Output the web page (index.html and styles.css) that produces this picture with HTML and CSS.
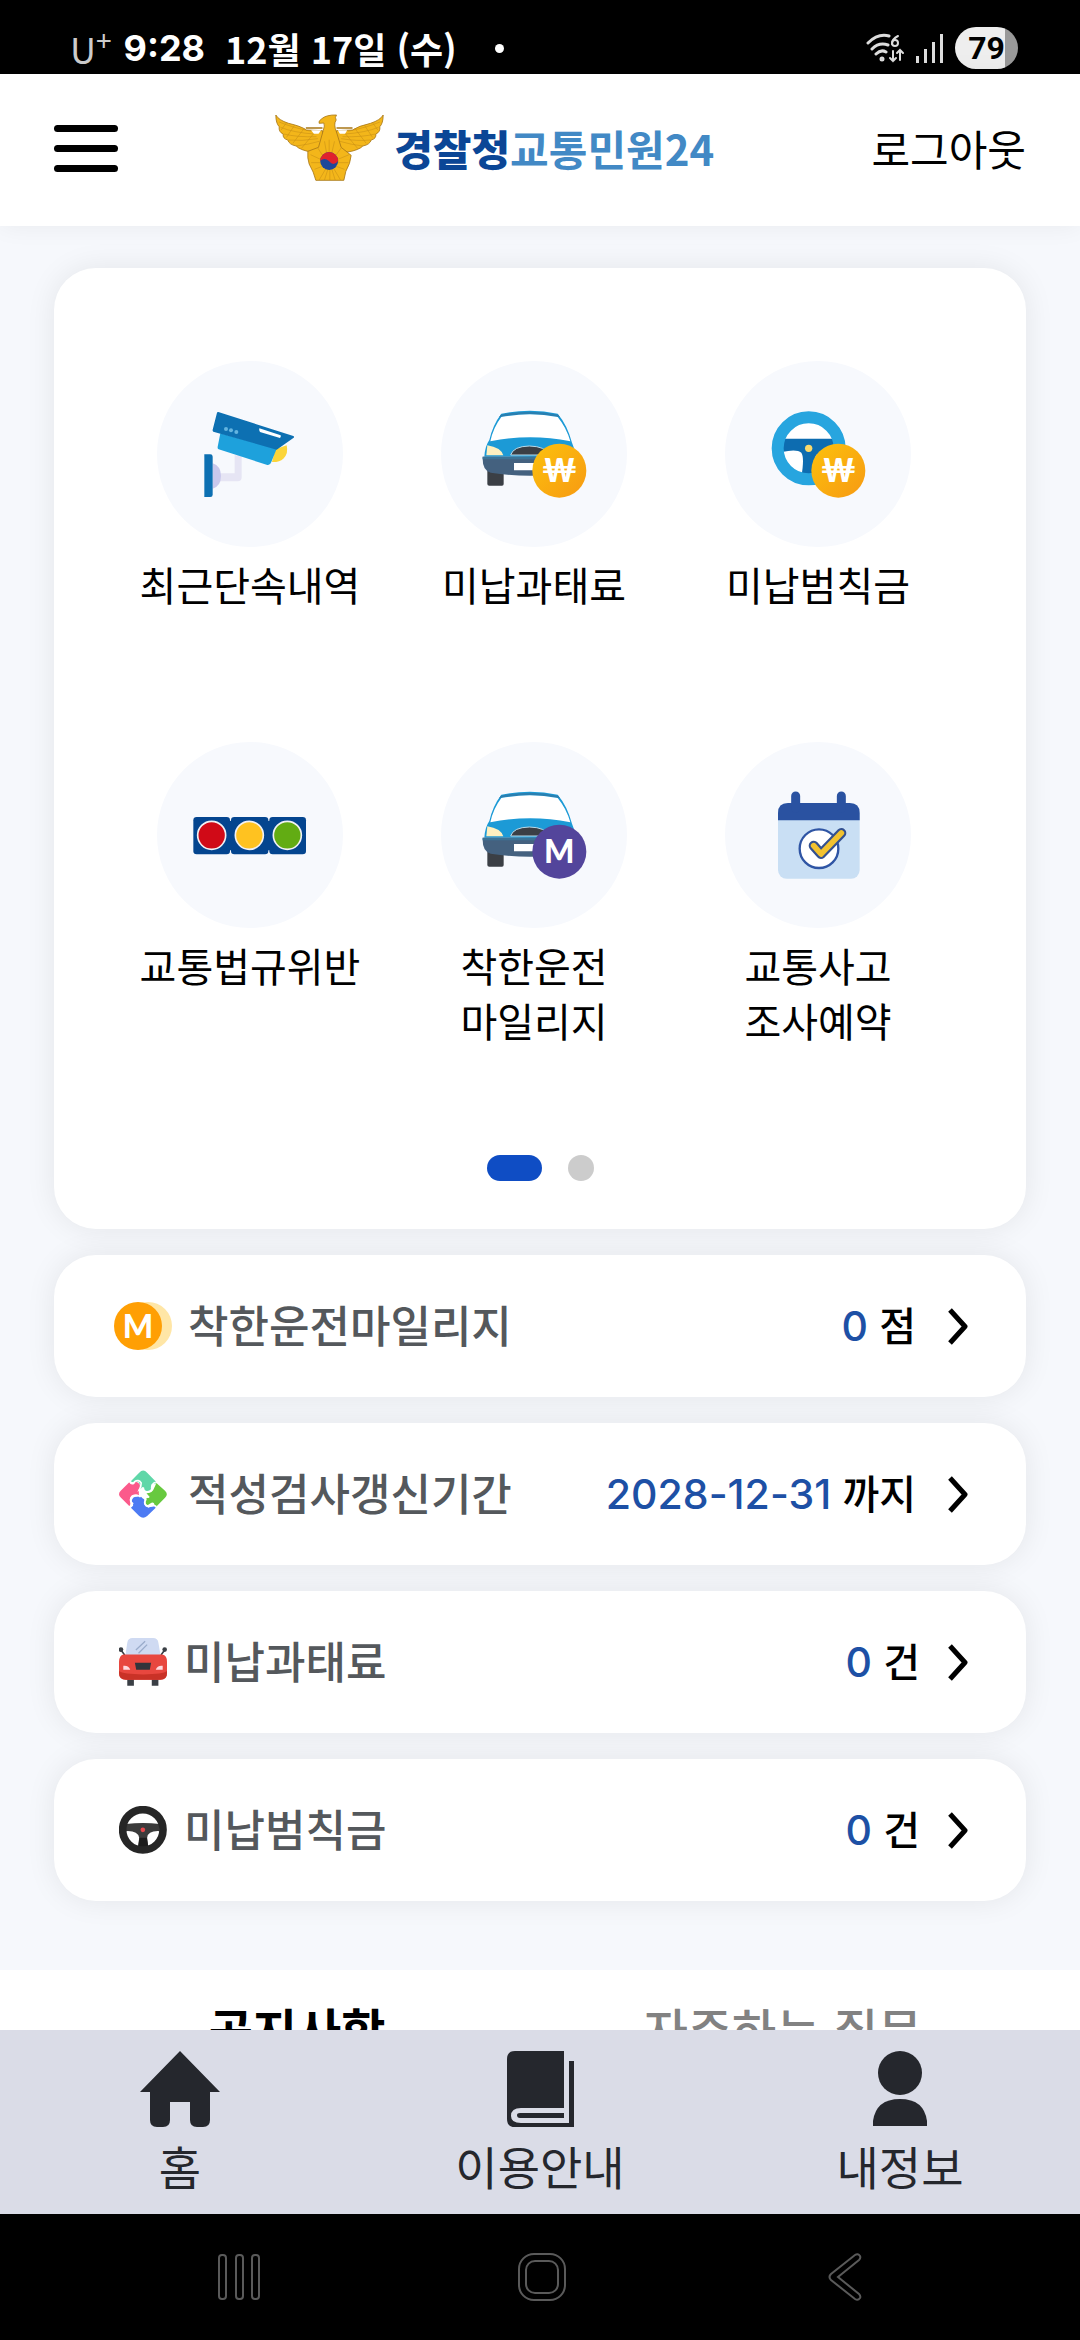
FILE: index.html
```html
<!DOCTYPE html>
<html lang="ko">
<head>
    <meta charset="UTF-8">
    <meta name="viewport" content="width=device-width, initial-scale=1.0">
    <title>경찰청교통민원24</title>
    <link rel="stylesheet" href="styles.css">
</head>
<body>
    <!-- 공용 아이콘 -->
    <svg class="sprite" aria-hidden="true">
        <defs>
            <linearGradient id="coin-fill" x1="0" y1="0" x2="1" y2="1">
                <stop offset="0" stop-color="#fcc10d"/>
                <stop offset="1" stop-color="#f79a12"/>
            </linearGradient>
            <symbol id="car" viewBox="57 63 558 558">
                <path d="M196 392h49v40q0 5-5 5h-38q-6 0-6-5z" fill="#3b3f45"/>
                <path d="M187 350Q189 318 202 300Q212 255 238 221Q325 204 407 221Q436 255 450 308L466 352z" fill="#1c9ad6"/>
                <path d="M236 224Q325 206 409 224L414 232Q325 214 231 232z" fill="#2a7fb0"/>
                <path d="M238 231Q325 215 407 231Q433 262 445 304Q325 280 205 304Q214 262 238 231z" fill="#fff"/>
                <path d="M196 316Q236 322 244 346H193z" fill="#fdf0c0"/>
                <path d="M266 345Q274 319 322 318Q372 319 380 345z" fill="#3b3f45" stroke="#b9d9e8" stroke-width="3"/>
                <path d="M182 350H466V395Q330 418 206 398Q180 392 182 350z" fill="#44617f"/>
                <path d="M182 350H466V358H182z" fill="#3b7396"/>
                <path d="M276 369h100v22H276z" fill="#fff"/>
            </symbol>
            <symbol id="chevron" viewBox="0 0 20 37">
                <path d="M2 2L17 18.500L2 35" fill="none" stroke="#000" stroke-width="5" stroke-linejoin="round"/>
            </symbol>
        </defs>
    </svg>

    <!-- 상태 표시줄 -->
    <div class="status-bar">
        <div class="status-left">
            <span class="carrier">U<sup>+</sup></span>
            <span class="clock">9:28</span>
            <span class="date">12월 17일 (수)</span>
            <span class="notice-dot"></span>
        </div>
        <div class="status-right">
            <svg class="wifi" viewBox="0 0 40 30" fill="none" stroke="#ddd" stroke-width="3" stroke-linecap="round">
                <path d="M2 10Q12 0 23 3M6 16Q13 9 22 12M10 21Q15 16 20 19"/>
                <path d="M32 3Q26 6 26 11M34 17V27M27 18V28M24 25L27 28L30 25M31 20L34 17L37 20" stroke-width="2"/>
                <circle cx="29" cy="10" r="3" stroke-width="2"/>
                <circle cx="16" cy="26" r="1" fill="#ddd"/>
            </svg>
            <svg class="signal" viewBox="0 0 28 30" fill="#ddd">
                <path d="M0 23h3v7H0zM8 16h3v14H8zM16 9h3v21h-3zM24 1h3v29h-3z"/>
            </svg>
            <span class="battery">79</span>
        </div>
    </div>

    <!-- 상단 헤더 -->
    <header class="header">
        <button class="menu-button" aria-label="메뉴">
            <span></span><span></span><span></span>
        </button>
        <a class="logo" href="#">
            <svg class="eagle" viewBox="42 48 326 204">
                <g fill="#f3b61a" stroke="#a87717" stroke-width="2.500" stroke-linejoin="round">
                    <path d="M44 51Q52 66 82 76Q118 84 136 96L184 98V152L150 162Q116 156 105 144Q84 140 80 126Q64 122 66 108Q52 102 54 86Q44 76 44 51z"/>
                    <path d="M366 51Q358 66 328 76Q292 84 274 96L226 98V152L260 162Q294 156 305 144Q326 140 330 126Q346 122 344 108Q358 102 356 86Q366 76 366 51z"/>
                    <path d="M186 98Q192 82 188 75L174 76Q170 70 182 62Q196 50 226 51Q220 58 225 66Q216 78 226 102L240 148L270 172Q268 196 254 220L248 247H164Q158 222 144 198Q138 180 140 160L172 148z"/>
                </g>
                <g fill="none" stroke="#c28a15" stroke-width="1.500">
                    <path d="M54 72Q92 88 150 100M58 88Q98 104 160 108M68 108Q108 118 166 116M82 126Q120 130 170 122M105 144Q140 140 174 130M120 152L160 104M95 136L130 90M76 118L100 82M60 96L76 74"/>
                    <path d="M356 72Q318 88 260 100M352 88Q312 104 250 108M342 108Q302 118 244 116M328 126Q290 130 240 122M305 144Q270 140 236 130M290 152L250 104M315 136L280 90M334 118L310 82M350 96L334 74"/>
                    <path d="M204 125V162M190 130L196 164M220 130L212 164M170 150L184 172M240 150L224 172M148 170L178 184M264 170L230 184M150 194L178 194M262 194L230 194M160 214L186 204M250 214L222 204M174 246L194 212M190 246L200 214M206 246V214M222 246L212 214M238 246L218 212"/>
                    <path d="M134 90H184M226 90H274" stroke="#a87717" stroke-width="5"/>
                </g>
                <path d="M150 97H180L172 107H158zM230 97H258L252 107H236z" fill="#fff"/>
                <circle cx="204" cy="189" r="27" fill="#1f4799"/>
                <path d="M177 189A27 27 0 0 1 231 189Q217 206 204 190Q190 176 177 189z" fill="#e0222d"/>
            </svg>
            <span class="logo-text"><b>경찰청</b>교통민원24</span>
        </a>
        <button class="logout">로그아웃</button>
    </header>

    <main class="content">
        <!-- 바로가기 카드 -->
        <section class="shortcuts">
            <div class="shortcut-grid">
                <a class="shortcut" href="#">
                    <svg viewBox="81 63 558 558">
                        <path d="M314 346h21v66q0 12-12 12h-54v-24h45z" fill="#e6e5f4"/>
                        <path d="M248 370Q273 378 273 408Q273 438 248 446z" fill="#c9c8ec"/>
                        <path d="M223 343h18q7 0 7 7v114q0 7-7 7h-18z" fill="#0d70b2"/>
                        <path d="M436 328L470 316Q476 342 460 356Q448 367 426 366z" fill="#fbd53a"/>
                        <path d="M271 280L440 326L424 366Q420 377 412 375L266 328Q262 326 263 320z" fill="#1ea1dc"/>
                        <path d="M265 216L490 288Q495 291 490 294L440 329L250 275Q247 273 248 269L261 218Q262 215 265 216z" fill="#0d70b2"/>
                        <path d="M388 265L452 286Q454 290 450 294L390 276Q386 270 388 265z" fill="#fff"/>
                        <g fill="#63b4e0"><circle cx="288" cy="267" r="6"/><circle cx="303" cy="271" r="6"/><circle cx="319" cy="276" r="6"/></g>
                    </svg>
                    <span>최근단속내역</span>
                </a>
                <a class="shortcut" href="#">
                    <svg viewBox="57 63 558 558">
                        <use href="#car" x="57" y="63" width="558" height="558"/>
                        <circle cx="412" cy="392" r="81" fill="url(#coin-fill)"/>
                        <text class="coin-letter" x="412" y="425">₩</text>
                    </svg>
                    <span>미납과태료</span>
                </a>
                <a class="shortcut" href="#">
                    <svg viewBox="909 63 558 558">
                        <circle cx="1160" cy="325" r="92" fill="#fff"/>
                        <path d="M1080 296H1240V340Q1184 330 1180 352V410H1138Q1148 352 1138 338Q1124 326 1080 336z" fill="#0d6cb0"/>
                        <circle cx="1160" cy="325" r="93" fill="none" stroke="#27a5df" stroke-width="36"/>
                        <circle cx="1160" cy="325" r="11" fill="#fbd96b"/>
                        <circle cx="1249" cy="392" r="81" fill="url(#coin-fill)"/>
                        <text class="coin-letter" x="1249" y="425">₩</text>
                    </svg>
                    <span>미납범칙금</span>
                </a>
                <a class="shortcut" href="#">
                    <svg viewBox="81 63 558 558">
                        <g fill="#04458f">
                            <rect x="190" y="288" width="110" height="112" rx="10"/>
                            <rect x="303" y="288" width="112" height="112" rx="10"/>
                            <rect x="418" y="288" width="110" height="112" rx="10"/>
                            <path d="M290 300h140v88H290z"/>
                        </g>
                        <g stroke="#f1f1f4" stroke-width="5">
                            <circle cx="245" cy="343" r="42" fill="#d00a17"/>
                            <circle cx="358" cy="343" r="42" fill="#ffc220"/>
                            <circle cx="472" cy="343" r="42" fill="#62ac13"/>
                        </g>
                    </svg>
                    <span>교통법규위반</span>
                </a>
                <a class="shortcut" href="#">
                    <svg viewBox="57 63 558 558">
                        <use href="#car" x="57" y="63" width="558" height="558"/>
                        <circle cx="412" cy="392" r="81" fill="#53459b"/>
                        <text class="coin-letter" x="412" y="427">M</text>
                    </svg>
                    <span>착한운전<br>마일리지</span>
                </a>
                <a class="shortcut" href="#">
                    <svg viewBox="489 63 558 558">
                        <rect x="648" y="246" width="245" height="227" rx="26" fill="#c9dff4"/>
                        <path d="M648 298V276Q648 246 678 246H863Q893 246 893 276V298z" fill="#2a52a1"/>
                        <path d="M701 225V262M838 225V262" stroke="#2a52a1" stroke-width="27" stroke-linecap="round"/>
                        <circle cx="771" cy="383" r="58" fill="#fff" stroke="#2f55a4" stroke-width="7"/>
                        <g fill="none" stroke-linecap="round" stroke-linejoin="round">
                            <path d="M755 374L777 399L838 336" stroke="#33508f" stroke-width="30"/>
                            <path d="M755 374L777 399L838 336" stroke="#f2c22f" stroke-width="17"/>
                        </g>
                    </svg>
                    <span>교통사고<br>조사예약</span>
                </a>
            </div>
            <div class="pager">
                <button class="page-dot active" aria-label="1 페이지"></button>
                <button class="page-dot" aria-label="2 페이지"></button>
            </div>
        </section>

        <!-- 내 정보 목록 -->
        <a class="info-row" href="#">
            <span class="info-icon">
                <svg viewBox="0 0 58 48" width="58" height="48">
                    <circle cx="34" cy="24" r="24" fill="#ffe6a6"/>
                    <circle cx="24" cy="24" r="24" fill="#ff9f04"/>
                    <text class="mileage-letter" x="24" y="36">M</text>
                </svg>
            </span>
            <span class="info-title">착한운전마일리지</span>
            <span class="info-value"><em>0</em> 점</span>
            <svg class="chevron"><use href="#chevron"/></svg>
        </a>
        <a class="info-row" href="#">
            <span class="info-icon">
                <svg viewBox="237 173 145 145" width="48" height="48">
                    <path d="M272 208L298 181Q310 168 322 181L348 208Q350 212 346 216Q335 212 334 222Q338 234 325 236Q313 238 313 226Q306 220 302 232H298Q304 204 286 208Q278 212 272 208z" fill="#5fd7a8"/>
                    <path d="M350 212L376 236Q387 246 376 257L350 283Q346 284 344 279Q344 266 330 275Q318 284 317 270Q314 258 328 256Q322 246 312 238Q332 248 340 234Q346 222 350 212z" fill="#67c93f"/>
                    <path d="M268 210L243 235Q231 246 243 257L268 282Q272 280 271 272Q266 254 280 248Q294 246 298 250Q300 238 296 232Q306 216 292 210Q284 208 282 216Q272 220 268 210z" fill="#fb5a8b"/>
                    <path d="M273 287L298 312Q310 323 322 312L348 287Q346 280 338 284Q314 290 314 272Q316 260 308 258Q298 246 292 254Q280 252 276 264Q274 276 280 280z" fill="#4d7bf3"/>
                    <path d="M270 208Q282 218 284 208Q296 200 304 212Q304 224 298 234Q310 230 314 238Q326 246 336 232Q334 214 348 210M302 232Q296 244 302 254Q290 246 278 252Q266 264 278 274Q276 282 270 286M300 250Q314 250 318 262Q308 278 326 284Q338 274 350 284M314 240L328 256" fill="none" stroke="#fff" stroke-width="5"/>
                </svg>
            </span>
            <span class="info-title">적성검사갱신기간</span>
            <span class="info-value"><em>2028-12-31</em> 까지</span>
            <svg class="chevron"><use href="#chevron"/></svg>
        </a>
        <a class="info-row tight" href="#">
            <span class="info-icon">
                <svg viewBox="237 168 145 145" width="48" height="48">
                    <path d="M262 280h20v32h-20zM336 280h20v32h-20z" fill="#3a3f45"/>
                    <path d="M243 204L256 222M375 204L362 222" stroke="#3a3f45" stroke-width="5"/>
                    <circle cx="243" cy="203" r="7" fill="#3a3f45"/>
                    <circle cx="375" cy="203" r="7" fill="#3a3f45"/>
                    <path d="M256 222L262 182Q264 168 278 168H340Q354 168 356 182L363 222z" fill="#cfdaf2"/>
                    <path d="M288 204L316 178M296 214L322 188" stroke="#9aaccb" stroke-width="4"/>
                    <path d="M250 218H368Q382 220 382 240V274Q382 294 362 294H258Q237 294 237 274V240Q238 220 250 218z" fill="#e8473f"/>
                    <path d="M237 268Q250 278 310 278Q370 278 382 268V274Q382 294 362 294H258Q237 294 237 274z" fill="#c93227"/>
                    <path d="M285 243H334L330 264H289z" fill="#33343b"/>
                    <path d="M250 252Q266 250 271 264H250zM369 252Q353 250 348 264H369z" fill="#ffd9de"/>
                </svg>
            </span>
            <span class="info-title">미납과태료</span>
            <span class="info-value"><em>0</em> 건</span>
            <svg class="chevron"><use href="#chevron"/></svg>
        </a>
        <a class="info-row tight" href="#">
            <span class="info-icon">
                <svg viewBox="237 672 145 145" width="48" height="48">
                    <path d="M258 726Q310 720 360 726V748Q324 746 322 768L326 800H294L298 768Q294 746 258 748z" fill="#3b3b3b"/>
                    <path d="M299 768H321L326 800H294z" fill="#1c1c1c"/>
                    <circle cx="309" cy="744" r="61" fill="none" stroke="#262626" stroke-width="23"/>
                    <circle cx="309" cy="744" r="7" fill="#e5484d"/>
                </svg>
            </span>
            <span class="info-title">미납범칙금</span>
            <span class="info-value"><em>0</em> 건</span>
            <svg class="chevron"><use href="#chevron"/></svg>
        </a>

        <!-- 게시판 탭 -->
        <section class="board">
            <button class="board-tab active">공지사항</button>
            <button class="board-tab">자주하는 질문</button>
        </section>
    </main>

    <!-- 하단 메뉴 -->
    <nav class="bottom-menu">
        <a class="menu-item" href="#">
            <svg viewBox="0 0 80 76" width="80" height="76" fill="#25272d">
                <path d="M40 0L80 41H70V69Q70 76 63 76H57Q50 76 50 69V51H30V69Q30 76 23 76H17Q10 76 10 69V41H0z"/>
            </svg>
            <span>홈</span>
        </a>
        <a class="menu-item" href="#">
            <svg viewBox="0 0 67 76" width="67" height="76" fill="#25272d">
                <path d="M8 0H57V57H14Q4 57 4 65Q4 72 14 72H62V10H67V76H8Q0 76 0 68V8Q0 0 8 0z"/>
                <path d="M13 62H57V67H13Q10 67 10 64Q10 62 13 62z"/>
            </svg>
            <span>이용안내</span>
        </a>
        <a class="menu-item" href="#">
            <svg viewBox="0 0 54 76" width="54" height="76" fill="#25272d">
                <circle cx="27" cy="22" r="22"/>
                <path d="M0 75V70Q3 48 27 48Q51 48 54 70V75z"/>
            </svg>
            <span>내정보</span>
        </a>
    </nav>

    <!-- 시스템 내비게이션 -->
    <div class="system-nav">
        <button aria-label="최근 앱">
            <svg viewBox="0 0 48 48" width="48" height="48">
                <rect x="4" y="2" width="7" height="44" rx="3"/>
                <rect x="21" y="2" width="7" height="44" rx="3"/>
                <rect x="37" y="2" width="7" height="44" rx="3"/>
            </svg>
        </button>
        <button aria-label="홈 화면">
            <svg viewBox="0 0 48 48" width="48" height="48">
                <rect x="1" y="1" width="46" height="46" rx="15"/>
                <rect x="8" y="8" width="32" height="32" rx="9"/>
            </svg>
        </button>
        <button aria-label="뒤로">
            <svg viewBox="0 0 48 48" width="48" height="48">
                <path d="M34 2Q37 0 39 3Q40 5 38 7L17 24L38 41Q40 43 39 45Q37 48 34 46L10 27Q7 24 10 21z"/>
            </svg>
        </button>
    </div>
</body>
</html>
```
FILE: styles.css
```css
/* 공통 */
* {
    box-sizing: border-box;
}

body {
    margin: 0;
    height: 100vh;
    display: flex;
    flex-direction: column;
    overflow: hidden;
    background: #f6f8fc;
    color: #000;
    font-family: "Noto Sans CJK KR", sans-serif;
}

a {
    color: inherit;
    text-decoration: none;
}

button {
    padding: 0;
    border: none;
    background: none;
    color: inherit;
    font-family: inherit;
    cursor: pointer;
}

svg {
    display: block;
    flex-shrink: 0;
}

.sprite {
    position: absolute;
    width: 0;
    height: 0;
}

/* 상태 표시줄 */
.status-bar {
    display: flex;
    justify-content: space-between;
    align-items: center;
    flex-shrink: 0;
    height: 74px;
    padding: 22px 62px 0 70px;
    background: #000;
    color: #fff;
}

.status-left,
.status-right {
    display: flex;
    align-items: center;
}

.status-left {
    font-size: 36px;
    font-weight: 700;
    line-height: 48px;
}

.carrier {
    margin-right: 12px;
    color: #ccc;
    font-weight: 400;
}

    .carrier sup {
        font-size: 28px;
        line-height: 0;
    }

.clock {
    margin-right: 20px;
    font-family: Inter, sans-serif;
}

.notice-dot {
    width: 9px;
    height: 9px;
    margin-left: 38px;
    border-radius: 50%;
    background: #fff;
}

.wifi {
    width: 40px;
    height: 30px;
    margin-right: 10px;
}

.signal {
    width: 28px;
    height: 30px;
    margin-right: 11px;
}

.battery {
    width: 63px;
    height: 42px;
    border-radius: 21px;
    background: linear-gradient(to right, #eee 79%, #999 79%);
    color: #000;
    font-family: Roboto, sans-serif;
    font-size: 32px;
    font-weight: 700;
    line-height: 42px;
    text-align: center;
}

/* 상단 헤더 */
.header {
    position: relative;
    z-index: 1;
    display: flex;
    justify-content: space-between;
    align-items: center;
    flex-shrink: 0;
    height: 152px;
    padding: 0 54px 4px;
    background: #fff;
    box-shadow: 0 0 24px rgba(0, 0, 0, 0.06);
}

.menu-button {
    display: flex;
    flex-direction: column;
    gap: 13px;
    width: 64px;
}

    .menu-button span {
        height: 7px;
        border-radius: 4px;
        background: #000;
    }

.logo {
    display: flex;
    align-items: center;
    gap: 10px;
}

.eagle {
    width: 109px;
    height: 68px;
}

.logo-text {
    color: #4289c5;
    font-size: 42px;
    font-weight: 700;
    line-height: 60px;
}

    .logo-text b {
        color: #0b4696;
    }

.logout {
    font-size: 42px;
    line-height: 60px;
}

/* 본문 */
.content {
    display: flex;
    flex-direction: column;
    flex: 1;
    gap: 26px;
    min-height: 0;
    padding: 42px 54px 0;
    overflow-y: auto;
    scrollbar-width: none;
}

    .content > * {
        flex-shrink: 0;
    }

.shortcuts,
.info-row {
    border-radius: 42px;
    background: #fff;
    box-shadow: 0 0 30px rgba(0, 0, 0, 0.08);
}

.shortcuts {
    padding: 93px 66px 48px 54px;
}

.shortcut-grid {
    display: grid;
    grid-template-columns: repeat(3, 1fr);
    row-gap: 71px;
}

.shortcut {
    display: flex;
    flex-direction: column;
    align-items: center;
    gap: 10px;
    min-height: 310px;
    font-size: 40px;
    line-height: 55px;
    text-align: center;
}

    .shortcut svg {
        width: 186px;
        height: 186px;
        border-radius: 50%;
        background: #f7f9fd;
    }

.coin-letter {
    fill: #fff;
    font-family: Lato, sans-serif;
    font-size: 96px;
    font-weight: 900;
    text-anchor: middle;
}

.pager {
    display: flex;
    justify-content: center;
    gap: 26px;
    margin: 103px -12px 0 0;
}

.page-dot {
    width: 26px;
    height: 26px;
    border-radius: 13px;
    background: #ccc;
}

    .page-dot.active {
        width: 55px;
        background: #0f4dc4;
    }

/* 정보 목록 */
.info-row {
    display: flex;
    align-items: center;
    gap: 16px;
    min-height: 142px;
    padding: 0 58px 0 60px;
}

    .info-row.tight {
        gap: 12px;
    }

.info-icon {
    display: flex;
    justify-content: center;
    width: 58px;
}

.mileage-letter {
    fill: #fff;
    font-family: Lato, sans-serif;
    font-size: 32px;
    font-weight: 900;
    text-anchor: middle;
}

.info-title,
.info-value {
    padding-bottom: 4px;
    font-weight: 500;
    line-height: 64px;
}

.info-title {
    flex: 1;
    color: #54585c;
    font-size: 44px;
}

.info-value {
    font-size: 40px;
}

    .info-value em {
        color: #1d50a5;
        font-family: Inter, sans-serif;
        font-size: 41px;
        font-style: normal;
        line-height: 1;
    }

.chevron {
    width: 20px;
    height: 37px;
    margin-left: 16px;
}

/* 게시판 탭 */
.board {
    display: grid;
    grid-template-columns: 1fr 1fr;
    margin: 43px -54px 0;
    padding: 22px 54px;
    background: #fff;
}

.board-tab {
    color: #828282;
    font-size: 48px;
    font-weight: 500;
    line-height: 72px;
}

    .board-tab.active {
        color: #000;
        font-weight: 700;
    }

/* 하단 메뉴 */
.bottom-menu {
    display: grid;
    grid-template-columns: repeat(3, 1fr);
    flex-shrink: 0;
    padding: 21px 0 15px;
    background: #dadce7;
}

.menu-item {
    display: flex;
    flex-direction: column;
    align-items: center;
    gap: 4px;
    color: #25272d;
    font-size: 46px;
    line-height: 68px;
}

/* 시스템 내비게이션 */
.system-nav {
    display: grid;
    grid-template-columns: repeat(3, 1fr);
    align-items: center;
    flex-shrink: 0;
    height: 126px;
    padding: 0 84px 0 88px;
    background: #000;
}

    .system-nav button {
        display: flex;
        justify-content: center;
    }

    .system-nav svg {
        fill: none;
        stroke: #5a5a5a;
        stroke-width: 2px;
    }
```
